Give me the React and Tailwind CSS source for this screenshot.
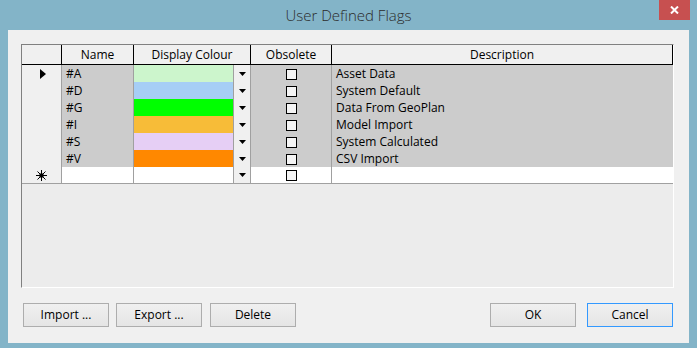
const flags = [
  { name: '#A', colour: '#ccf5cc', description: 'Asset Data' },
  { name: '#D', colour: '#a6cef5', description: 'System Default' },
  { name: '#G', colour: '#00ff00', description: 'Data From GeoPlan' },
  { name: '#I', colour: '#f7bc38', description: 'Model Import' },
  { name: '#S', colour: '#e6cff5', description: 'System Calculated' },
  { name: '#V', colour: '#ff8800', description: 'CSV Import' },
];

const cols = 'grid grid-cols-[40px_72px_117px_81px_341px]';

function DropArrow() {
  return (
    <div className="w-[16px] h-full bg-[#f0f0f0] flex items-center justify-center">
      <svg width="7" height="4" viewBox="0 0 7 4">
        <path d="M0 0h7L3.5 4z" fill="#000" />
      </svg>
    </div>
  );
}

function CheckBox() {
  return <div className="w-[11px] h-[11px] border border-black bg-[#f4f4f4]" />;
}

function Row({ flag, current }) {
  const fill = flag ? 'bg-[#cccccc]' : 'bg-white';
  return (
    <div className={`${cols} h-[17px] border-b border-[#a0a0a0]`}>
      <div className="bg-[#f0f0f0] border-r border-[#a0a0a0] flex items-center justify-center">
        {current && (
          <svg width="6" height="10" viewBox="0 0 6 10" className="ml-[2px]">
            <path d="M0 0l6 5L0 10z" fill="#000" />
          </svg>
        )}
        {!flag && (
          <svg width="11" height="11" viewBox="0 0 11 11">
            <g stroke="#000" strokeWidth="1">
              <path d="M5.5 0v11M0 5.5h11M1.5 1.5l8 8M9.5 1.5l-8 8" />
            </g>
            <rect x="3.5" y="3.5" width="4" height="4" fill="#000" />
          </svg>
        )}
      </div>
      <div className={`${fill} border-r border-[#a0a0a0] pl-[4px] flex items-center`}>
        {flag?.name}
      </div>
      <div className="border-r border-[#a0a0a0] flex">
        <div className="flex-1 border-r border-[#a0a0a0]" style={{ background: flag ? flag.colour : '#fff' }} />
        <DropArrow />
      </div>
      <div className={`${fill} border-r border-[#a0a0a0] flex items-center justify-center`}>
        <CheckBox />
      </div>
      <div className={`${fill} pl-[4px] flex items-center`}>{flag?.description}</div>
    </div>
  );
}

function Button({ children, focused, className = '' }) {
  return (
    <button
      className={`w-[86px] h-[24px] border ${focused ? 'border-[#3399ff]' : 'border-[#adadad]'} bg-gradient-to-b from-[#f0f0f0] to-[#e5e5e5] text-[12px] text-black ${className}`}
    >
      {children}
    </button>
  );
}

export default function App() {
  return (
    <div
      className="w-[697px] h-[348px] bg-[#83b4c8] flex flex-col text-[12px] text-black"
      style={{ fontFamily: '"Open Sans", "Noto Sans", sans-serif' }}
    >
      {/* Title bar */}
      <div className="relative h-[30px] flex items-center justify-center">
        <span className="text-[15px] text-[#2b2b2b] font-light">User Defined Flags</span>
        <div className="absolute top-0 right-[7px] w-[31px] h-[20px] bg-[#c75050] flex items-center justify-center">
          <svg width="9" height="8" viewBox="0 0 9 8">
            <path d="M1 0.5l7 7M8 0.5l-7 7" stroke="#fff" strokeWidth="2" />
          </svg>
        </div>
      </div>

      {/* Client area */}
      <div className="mx-[8px] h-[313px] bg-[#f0f0f0] flex flex-col pt-[14px] pl-[13px] pr-[15px]">
        <div className="w-[653px] h-[244px] border-t border-l border-[#808080] border-r border-b border-r-[#ffffff] border-b-[#ffffff] bg-[#ececec] flex flex-col">
          {/* Header */}
          <div className={`${cols} h-[20px] bg-[#f0f0f0] border-b border-black`}>
            <div className="border-r border-black" />
            <div className="border-r border-black flex items-center justify-center">Name</div>
            <div className="border-r border-black flex items-center justify-center">Display Colour</div>
            <div className="border-r border-black flex items-center justify-center">Obsolete</div>
            <div className="border-r border-black flex items-center justify-center">Description</div>
          </div>
          {flags.map((f, i) => (
            <Row key={f.name} flag={f} current={i === 0} />
          ))}
          <Row flag={null} />
        </div>

        <div className="mt-[15px] flex items-center pl-[2px]">
          <Button>Import ...</Button>
          <Button className="ml-[7px]">Export ...</Button>
          <Button className="ml-[8px]">Delete</Button>
          <div className="flex-1" />
          <Button>OK</Button>
          <Button focused className="ml-[11px] mr-[1px]">Cancel</Button>
        </div>
      </div>
    </div>
  );
}
